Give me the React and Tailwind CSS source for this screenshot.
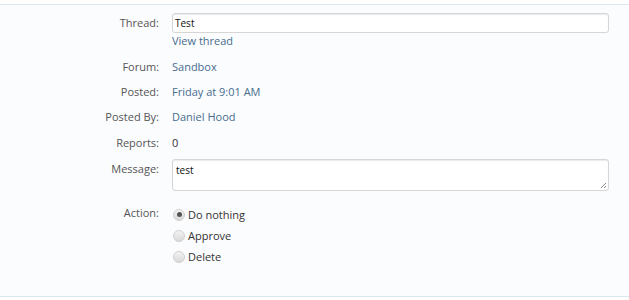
export default function App() {
  const label = "w-[160px] shrink-0 text-right pr-[1px] text-[#555]";
  const link = "text-[#476c8e]";
  const Radio = ({ checked, text }) => (
    <div className="flex items-center h-[21px]">
      <span className="relative w-[12px] h-[12px] rounded-full border border-[#cfcfcf] bg-gradient-to-b from-[#f4f4f4] to-[#d9d9d9] flex items-center justify-center ml-[1px]">
        {checked && <span className="w-[5px] h-[5px] rounded-full bg-[#555]" />}
      </span>
      <span className="ml-[3px] text-[#333]">{text}</span>
    </div>
  );
  return (
    <div className="w-[629px] h-[300px] bg-white pt-[4px]" style={{ fontFamily: '"Open Sans", "Noto Sans", sans-serif' }}>
      <div className="h-[293px] border-t border-b border-[#dbe8f1] bg-[#fbfcfe] text-[11px] leading-[16px]">
        {/* Thread */}
        <div className="flex mt-[8px]">
          <div className={`${label} pt-[2px]`}>Thread:</div>
          <div className="ml-[12px] flex flex-col">
            <div className="w-[437px] h-[20px] border border-[#d6d6d6] bg-white rounded-[3px] px-[2px] flex items-center text-[10px] text-[#111] shadow-[inset_0_1px_1px_rgba(0,0,0,0.08)]">Test</div>
            <div className={`${link} h-[16px]`}>View thread</div>
          </div>
        </div>
        {/* Forum */}
        <div className="flex mt-[10px]">
          <div className={label}>Forum:</div>
          <div className={`ml-[12px] ${link}`}>Sandbox</div>
        </div>
        <div className="flex mt-[9px]">
          <div className={label}>Posted:</div>
          <div className={`ml-[12px] ${link}`}>Friday at 9:01 AM</div>
        </div>
        <div className="flex mt-[9px]">
          <div className={label}>Posted By:</div>
          <div className={`ml-[12px] ${link}`}>Daniel Hood</div>
        </div>
        <div className="flex mt-[10px]">
          <div className={label}>Reports:</div>
          <div className="ml-[12px] text-[#333]">0</div>
        </div>
        {/* Message */}
        <div className="flex mt-[8px]">
          <div className={`${label} pt-[2px]`}>Message:</div>
          <div className="ml-[12px] relative w-[437px] h-[32px] border border-[#d6d6d6] bg-white rounded-[3px] px-[3px] pt-[2px] text-[10px] text-[#111] shadow-[inset_0_1px_1px_rgba(0,0,0,0.08)]">
            test
            <svg className="absolute right-[1px] bottom-[1px]" width="7" height="7" viewBox="0 0 7 7">
              <path d="M6 1 L1 6 M6 4 L4 6" stroke="#888" strokeWidth="1" fill="none" />
            </svg>
          </div>
        </div>
        {/* Action */}
        <div className="flex mt-[13px]">
          <div className={`${label} pt-[1px]`}>Action:</div>
          <div className="ml-[12px] flex flex-col">
            <Radio checked text="Do nothing" />
            <Radio text="Approve" />
            <Radio text="Delete" />
          </div>
        </div>
      </div>
    </div>
  );
}
